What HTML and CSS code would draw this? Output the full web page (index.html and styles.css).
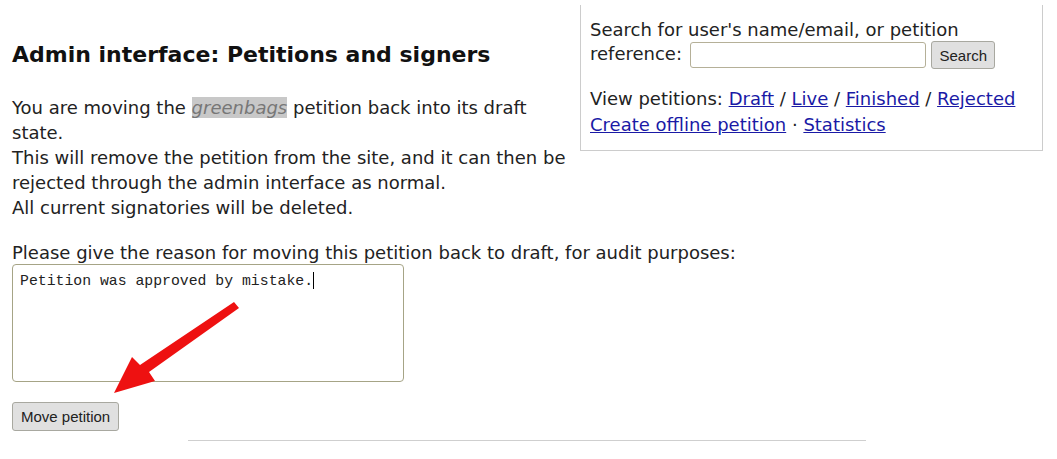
FILE: index.html
```html
<!DOCTYPE html>
<html>
<head>
<meta charset="utf-8">
<link rel="stylesheet" href="styles.css">
</head>
<body>
<div class="page">
  <div class="adminbox">
    <form class="search">
      Search for user's name/email, or petition reference: <input type="text" class="search-input"> <button type="button" class="btn">Search</button>
    </form>
    <p class="nav">View petitions: <a href="#">Draft</a> / <a href="#">Live</a> / <a href="#">Finished</a> / <a href="#">Rejected</a><br>
    <a href="#">Create offline petition</a> · <a href="#">Statistics</a></p>
  </div>
  <h1 class="title">Admin interface: Petitions and signers</h1>
  <p class="msg">You are moving the <em class="ref">greenbags</em> petition back into its draft state.<br>
  This will remove the petition from the site, and it can then be rejected through the admin interface as normal.<br>
  All current signatories will be deleted.</p>
  <form class="reason">
    <label class="reason-label">Please give the reason for moving this petition back to draft, for audit purposes:</label>
    <div class="field">
      <div class="textarea">Petition was approved by mistake.<span class="caret"></span></div>
      <svg class="arrow" width="140" height="100" viewBox="0 0 140 100">
        <polygon fill="#ee1111" points="122,5 127,11 37,75 43,84 2,96 20,60 28,68"/>
      </svg>
    </div>
    <button type="button" class="btn move">Move petition</button>
  </form>
  <div class="footer">
    <hr class="rule">
  </div>
</div>
</body>
</html>
```
FILE: styles.css
```css
html, body {
  margin: 0;
  padding: 0;
  background: #fff;
}
body {
  font-family: "DejaVu Sans", Verdana, sans-serif;
  font-size: 18px;
  color: #222;
}
.page {
  padding: 0 12px;
}
.adminbox {
  float: right;
  width: 443px;
  margin: 5px 2px 10px 12px;
  padding: 14px 9px 12px 9px;
  border: 1px solid #ccc;
  border-top: none;
  font-size: 18px;
  line-height: 22px;
  color: #222;
}
.search {
  margin: 0;
}
.search-input {
  width: 230px;
  height: 22px;
  margin: 0 0 0 2px;
  padding: 1px 2px;
  border: 1px solid #b5b098;
  border-radius: 3px;
  vertical-align: middle;
  box-sizing: content-box;
}
.btn {
  font-family: "Liberation Sans", Arial, sans-serif;
  font-size: 15px;
  color: #222;
  background: #e0e0e0;
  border: 1px solid #a8a8a0;
  border-radius: 3px;
  padding: 0 7px;
  vertical-align: middle;
  white-space: nowrap;
}
.adminbox .btn {
  height: 28px;
  margin-left: 0;
  padding: 0 7px;
}
.nav {
  margin: 17px 0 0;
  line-height: 26px;
}
.nav a {
  color: #1a1aa6;
}
.title {
  margin: 0;
  padding-top: 42px;
  font-size: 22px;
  line-height: 26px;
  font-weight: bold;
  color: #111;
}
.msg {
  margin: 27px 0 0;
  line-height: 25px;
}
.ref {
  color: #777;
  background: #c8c8c8;
}
.reason {
  margin: 22px 0 0;
}
.reason-label {
  display: block;
  line-height: 22px;
}
.field {
  position: relative;
  width: 392px;
}
.textarea {
  padding: 7px 4px 2px 7px;
  border: 1px solid #a6a486;
  border-radius: 4px;
  font-family: "Liberation Mono", "Courier New", monospace;
  font-size: 14.8px;
  line-height: 18px;
  color: #222;
  box-sizing: border-box;
  width: 392px;
  height: 118px;
}
.caret {
  display: inline-block;
  width: 1px;
  height: 17px;
  background: #000;
  vertical-align: -4px;
}
.arrow {
  position: absolute;
  left: 100px;
  top: 33px;
}
.move {
  display: block;
  margin-top: 20px;
  height: 29px;
  padding: 0 8px;
}
.footer {
  padding-left: 176px;
  width: 678px;
}
.rule {
  margin: 9px 0 0;
  border: none;
  border-top: 1px solid #cfcfcf;
  height: 0;
}
```
